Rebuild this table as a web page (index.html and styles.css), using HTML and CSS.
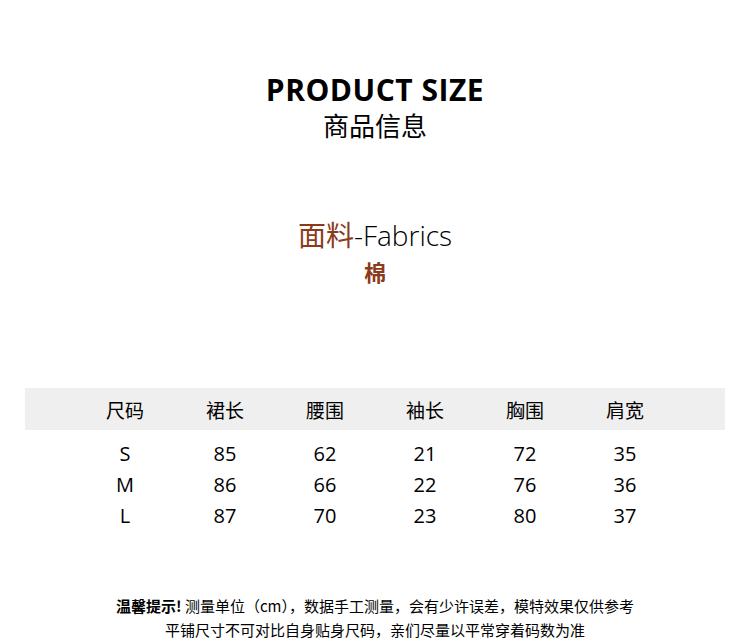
FILE: index.html
```html
<!DOCTYPE html>
<html lang="zh">
<head>
<meta charset="utf-8">
<link rel="stylesheet" href="styles.css">
</head>
<body>
<div class="page">
  <header class="heading">
    <div class="title">PRODUCT SIZE</div>
    <div class="subtitle">商品信息</div>
  </header>
  <section class="fabric">
    <div class="fabric-title"><span class="cn">面料</span><span class="en">-Fabrics</span></div>
    <div class="fabric-value">棉</div>
  </section>
  <section class="size-table">
    <div class="row head">
      <div class="cell">尺码</div><div class="cell">裙长</div><div class="cell">腰围</div><div class="cell">袖长</div><div class="cell">胸围</div><div class="cell">肩宽</div>
    </div>
    <div class="body">
      <div class="row">
        <div class="cell">S</div><div class="cell">85</div><div class="cell">62</div><div class="cell">21</div><div class="cell">72</div><div class="cell">35</div>
      </div>
      <div class="row">
        <div class="cell">M</div><div class="cell">86</div><div class="cell">66</div><div class="cell">22</div><div class="cell">76</div><div class="cell">36</div>
      </div>
      <div class="row">
        <div class="cell">L</div><div class="cell">87</div><div class="cell">70</div><div class="cell">23</div><div class="cell">80</div><div class="cell">37</div>
      </div>
    </div>
  </section>
  <footer class="note">
    <p><b>温馨提示!</b> 测量单位（cm），数据手工测量，会有少许误差，模特效果仅供参考</p>
    <p>平铺尺寸不可对比自身贴身尺码，亲们尽量以平常穿着码数为准</p>
  </footer>
</div>
</body>
</html>
```
FILE: styles.css
```css
html, body {
  margin: 0;
  padding: 0;
  background: #fff;
}
body {
  font-family: "Open Sans", "Noto Sans CJK SC", sans-serif;
  color: #000;
}
.page {
  width: 750px;
  padding-top: 73px;
}
.heading {
  text-align: center;
}
.title {
  font-size: 30px;
  font-weight: 700;
  line-height: 34px;
  letter-spacing: 0.5px;
}
.subtitle {
  font-family: "Noto Sans CJK SC", sans-serif;
  font-size: 26px;
  line-height: 36px;
  font-weight: 400;
}
.fabric {
  text-align: center;
  margin-top: 73px;
}
.fabric-title {
  font-size: 28px;
  line-height: 36px;
}
.fabric-title .cn {
  font-family: "Noto Sans CJK SC", sans-serif;
  color: #8b3a1a;
}
.fabric-title .en {
  font-weight: 300;
  color: #000;
}
.fabric-value {
  font-family: "Noto Sans CJK SC", sans-serif;
  font-size: 22px;
  line-height: 30px;
  font-weight: 700;
  color: #8b3a1a;
  margin-top: 3px;
}
.size-table {
  margin: 102px 25px 0;
  width: 700px;
}
.row {
  display: grid;
  grid-template-columns: repeat(6, 100px);
  padding: 0 50px;
}
.row.head {
  background: #efefef;
  height: 42px;
  align-items: center;
  font-family: "Noto Sans CJK SC", sans-serif;
  font-size: 19px;
}
.body {
  padding-top: 8px;
}
.body .row {
  font-size: 20px;
  line-height: 31px;
}
.cell {
  text-align: center;
}
.note {
  margin-top: 63px;
  text-align: center;
  font-family: "Noto Sans CJK SC", sans-serif;
  font-size: 15px;
  line-height: 24px;
}
.note p {
  margin: 0;
}
.note b {
  font-weight: 700;
}
```
